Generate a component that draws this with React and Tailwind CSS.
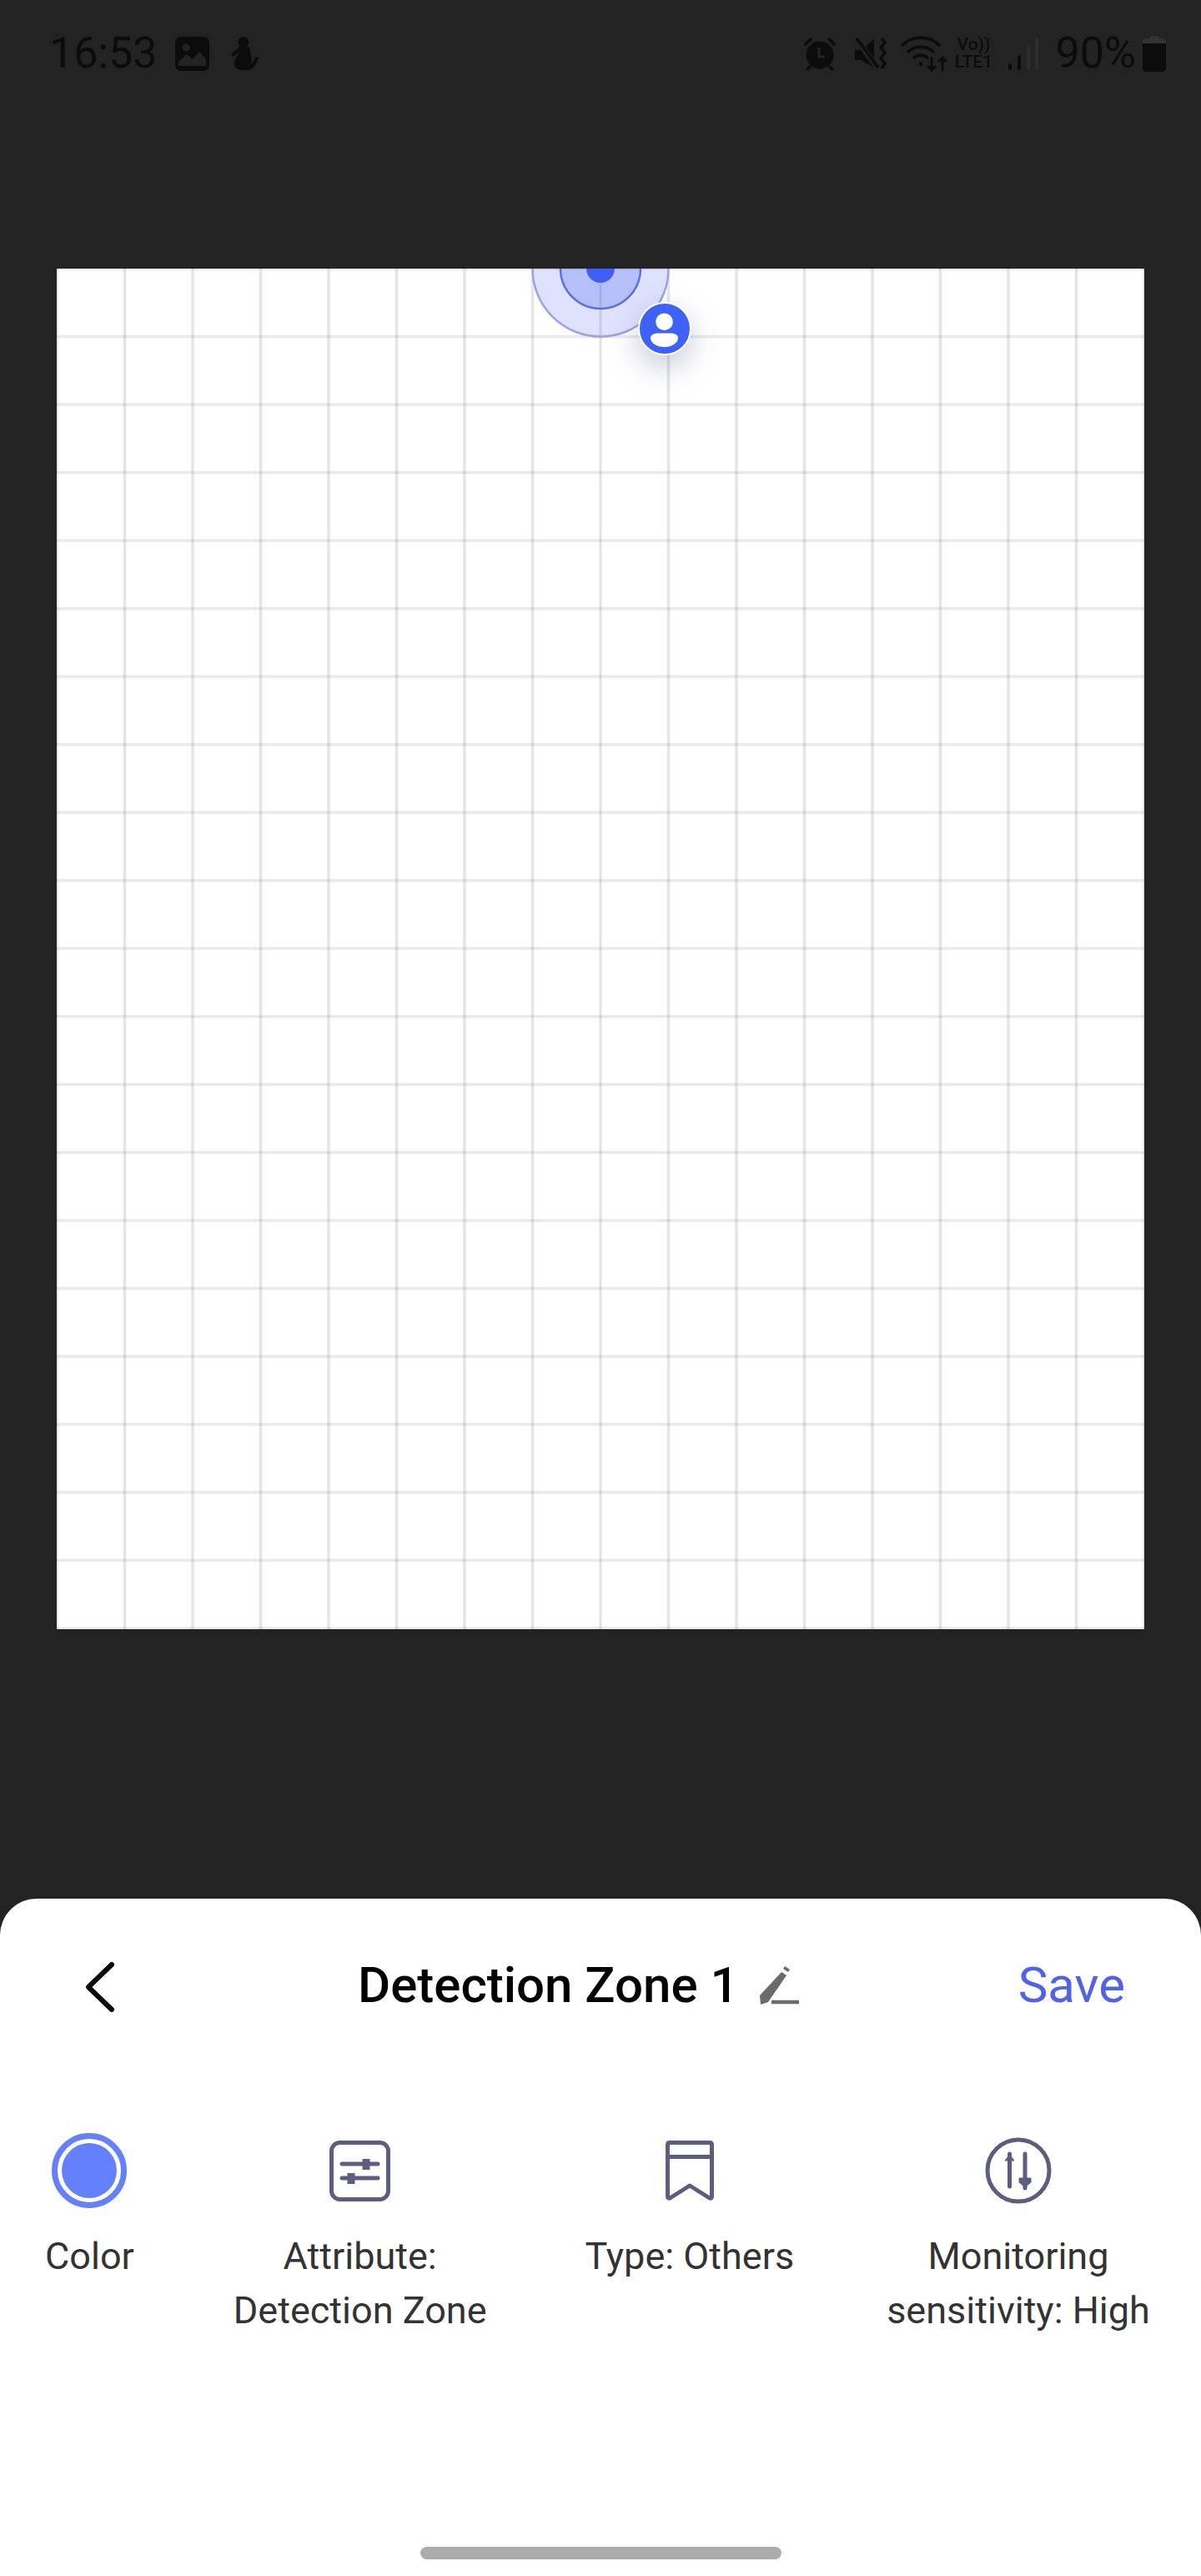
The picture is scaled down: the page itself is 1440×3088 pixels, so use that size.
import React from 'react';

const ink = '#0c0c0c';
const steps = Array.from({ length: 21 }, (_, i) => i * 81.5);

const ImageIcon = () => (
  <svg width="41" height="41" viewBox="0 0 41 41">
    <rect width="41" height="41" rx="7" fill={ink} />
    <circle cx="13" cy="13" r="4.5" fill="#232323" />
    <path d="M4 35V30L14 21L21 27L29 18L37 27V35Z" fill="#232323" />
  </svg>
);

const PersonIcon = () => (
  <svg width="37" height="41" viewBox="0 0 37 41" fill={ink}>
    <circle cx="18" cy="6.5" r="6.5" />
    <path d="M13 12L3 21L5 24L13 18L8 28C5 32 7 36 10 38C12 41 25 41 28 38C32 36 34 31 36 25L33 24C31 28 29 31 27 33C28 26 27 18 24 12Z" />
  </svg>
);

const AlarmIcon = () => (
  <svg width="38" height="39" viewBox="0 0 38 39">
    <circle cx="19" cy="21" r="16.5" fill={ink} />
    <path d="M2 8L8 2M36 8L30 2M7 35L4 38M31 35L34 38" stroke={ink} strokeWidth="3.5" strokeLinecap="round" />
    <path d="M18 12V23H25" stroke="#232323" strokeWidth="3" fill="none" />
  </svg>
);

const MuteIcon = () => (
  <svg width="39" height="38" viewBox="0 0 39 38">
    <path d="M1 15H8L24 2V36L8 27H1Z" fill={ink} />
    <path d="M2 1L28 36" stroke="#232323" strokeWidth="7" />
    <path d="M3 1L29 36" stroke={ink} strokeWidth="3.5" />
    <path d="M33 1L37 6L32 12L37 18L32 25L37 31L33 37" stroke={ink} strokeWidth="3.5" fill="none" />
  </svg>
);

const WifiIcon = () => (
  <svg width="57" height="44" viewBox="0 0 57 44" fill="none" stroke={ink} strokeWidth="3.5">
    <path d="M1 13C13 0 35 0 47 13" />
    <path d="M8 21C17 12 31 12 40 21" />
    <path d="M15 28C20 23 28 23 33 28" />
    <circle cx="24" cy="35" r="2.5" fill={ink} stroke="none" />
    <path d="M37 26V42M32 37L37 42L42 37M50 43V27M45 32L50 27L55 32" strokeWidth="3" />
  </svg>
);

const SignalIcon = () => (
  <svg width="36" height="39" viewBox="0 0 36 39">
    <rect x="0" y="31" width="4" height="8" rx="2" fill={ink} />
    <rect x="11" y="21" width="4" height="18" rx="2" fill={ink} />
    <rect x="22" y="10" width="4" height="29" rx="2" fill="#2e2e2e" />
    <rect x="32" y="0" width="4" height="39" rx="2" fill="#2e2e2e" />
  </svg>
);

const BatteryIcon = () => (
  <svg width="28" height="43" viewBox="0 0 28 43">
    <path d="M9 0H19V3H24C26 3 28 5 28 7V11H0V7C0 5 2 3 4 3H9Z" fill="#333333" />
    <path d="M0 9H28V39C28 41 26 43 24 43H4C2 43 0 41 0 39Z" fill={ink} />
  </svg>
);

const PencilIcon = () => (
  <svg width="49" height="46" viewBox="0 0 49 46">
    <path d="M27 7L33 11L11 43L2 46L1 35Z" fill="#6b6b6b" />
    <path d="M29 3L31 0L37 4L35 7Z" fill="#6b6b6b" />
    <path d="M15 43H48" stroke="#6b6b6b" strokeWidth="4.5" />
  </svg>
);

const AttributeIcon = () => (
  <svg width="73" height="73" viewBox="0 0 73 73" fill="none" stroke="#5c5d80" strokeWidth="5">
    <rect x="2.5" y="2.5" width="68" height="68" rx="10" />
    <path d="M15 28H58M15 45H58" strokeLinecap="round" />
    <path d="M44 22V35M26 39V52" strokeWidth="9" />
  </svg>
);

const BookmarkIcon = () => (
  <svg width="58" height="72" viewBox="0 0 58 72" fill="none" stroke="#5c5d80" strokeWidth="5" strokeLinejoin="round">
    <path d="M2.5 5C2.5 3.5 3.5 2.5 5 2.5H53C54.5 2.5 55.5 3.5 55.5 5V67C55.5 69 54 70 52 68.5L29 54L6 68.5C4 70 2.5 69 2.5 67Z" />
    <path d="M2.5 19.5H55.5" />
  </svg>
);

const SensitivityIcon = () => (
  <svg width="80" height="80" viewBox="0 0 80 80" fill="none" stroke="#5c5d80" strokeWidth="5">
    <circle cx="40" cy="40" r="37" />
    <path d="M29.5 59V20" strokeLinecap="round" />
    <path d="M48 20V61" strokeLinecap="round" />
    <path d="M24 28L29.5 21L35 28Z" fill="#5c5d80" strokeWidth="1" />
    <path d="M41 49H55V54L48 60L41 54Z" fill="#5c5d80" strokeWidth="1" />
  </svg>
);

const tools = [
  { space: '', icon: <div className="w-[90px] h-[90px] rounded-full border-[7px] border-[#6580fb] p-[5px]"><div className="w-full h-full rounded-full bg-[#6580fb]" /></div>, lines: ['Color'] },
  { space: 'ml-[119px]', icon: <AttributeIcon />, lines: ['Attribute:', 'Detection Zone'] },
  { space: 'ml-[118px]', icon: <BookmarkIcon />, lines: ['Type: Others'] },
  { space: 'ml-[111px]', icon: <SensitivityIcon />, lines: ['Monitoring', 'sensitivity: High'] },
];

const App = () => {
  return (
    <div className="h-[3088px] w-[1440px] overflow-hidden bg-[#232323] flex flex-col font-['Roboto',sans-serif]">
      {/* status bar */}
      <div className="h-[125px] pl-[59px] pr-[42px] pt-[40px] flex items-start justify-between text-[#0c0c0c]">
        <div className="flex items-center gap-[21px] h-[48px]">
          <span className="text-[52px] leading-none">16:53</span>
          <div className="flex items-center gap-[23px]">
            <ImageIcon />
            <PersonIcon />
          </div>
        </div>
        <div className="flex items-center h-[48px]">
          <AlarmIcon />
          <div className="ml-[22px]"><MuteIcon /></div>
          <div className="ml-[17px]"><WifiIcon /></div>
          <div className="ml-[5px] w-[50px] flex flex-col items-center text-[21px] font-medium leading-[21px]">
            <span>Vo))</span>
            <span>LTE1</span>
          </div>
          <div className="ml-[17px]"><SignalIcon /></div>
          <span className="ml-[20px] text-[52px] leading-none">90%</span>
          <div className="ml-[8px]"><BatteryIcon /></div>
        </div>
      </div>

      {/* zone canvas */}
      <div className="relative mt-[197px] ml-[68px] w-[1304px] h-[1631px] bg-white overflow-hidden">
        <svg width="1304" height="1631" viewBox="0 0 1304 1631" className="block">
          {steps.slice(0, 17).map((x) => (
            <path key={x} d={`M${x} 0V1631`} stroke="#1b1b30" strokeOpacity="0.115" strokeWidth="3.5" />
          ))}
          {steps.map((y) => (
            <path key={y} d={`M0 ${y}H1304`} stroke="#1b1b30" strokeOpacity="0.095" strokeWidth="3.5" />
          ))}
          <circle cx="652" cy="0" r="81.5" fill="#6f7df5" fillOpacity="0.22" stroke="#9aa2e8" strokeWidth="2.5" />
          <circle cx="652" cy="0" r="48" fill="#5a70f0" fillOpacity="0.3" stroke="#5a70e6" strokeWidth="2.5" />
          <circle cx="652" cy="0" r="17" fill="#3f5ff5" />
        </svg>
        <div className="absolute left-[697px] top-[40px] w-[64px] h-[64px] rounded-full bg-[#3f62f6] border-2 border-white shadow-[0_14px_36px_rgba(40,50,110,0.26)]">
          <svg width="60" height="60" viewBox="2 2 60 60" fill="white">
            <circle cx="31.5" cy="23.8" r="10.3" />
            <path d="M15 43C15 39 20 37.5 24 37.5H39C43 37.5 48 39 48 43C48 49 41 54 31.5 54C22 54 15 49 15 43Z" />
          </svg>
        </div>
      </div>

      {/* bottom sheet */}
      <div className="mt-auto h-[812px] bg-white rounded-t-[44px] flex flex-col">
        <div className="mt-[72px] h-[64px] flex items-center pl-[103px] pr-[91px]">
          <svg width="34" height="60" viewBox="0 0 34 60" fill="none" stroke="#0a0a0a" strokeWidth="6" strokeLinecap="round" strokeLinejoin="round" className="mt-[3px]">
            <path d="M31 3L3 30L31 57" />
          </svg>
          <span className="ml-[292px] text-[60px] leading-[64px] font-medium text-black whitespace-nowrap">Detection Zone 1</span>
          <div className="ml-[24px]"><PencilIcon /></div>
          <span className="ml-auto text-[60px] leading-[64px] text-[#4f63e8]">Save</span>
        </div>

        <div className="mt-[145px] pl-[54px] flex items-start">
          {tools.map((tool) => (
            <div key={tool.lines[0]} className={`flex flex-col items-center ${tool.space}`}>
              <div className="h-[90px] flex items-center justify-center">{tool.icon}</div>
              <div className="mt-[25px] text-[45px] leading-[65px] text-[#333333] text-center whitespace-nowrap">
                {tool.lines.map((line) => (
                  <div key={line}>{line}</div>
                ))}
              </div>
            </div>
          ))}
        </div>

        <div className="mt-auto mb-[20px] mx-auto w-[433px] h-[15px] rounded-full bg-[#acacac]" />
      </div>
    </div>
  );
};

export default App;
